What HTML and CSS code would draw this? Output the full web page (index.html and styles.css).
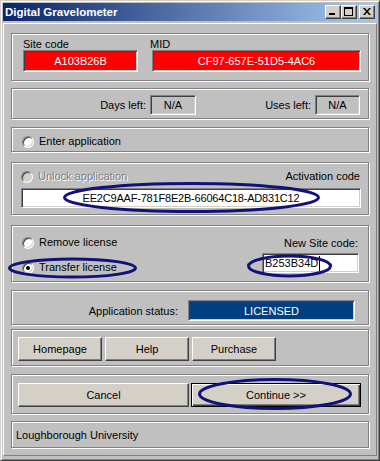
FILE: index.html
```html
<!DOCTYPE html>
<html>
<head>
<meta charset="utf-8">
<link rel="stylesheet" href="styles.css">
</head>
<body>
<div class="window">
  <div class="titlebar">
    <span class="title">Digital Gravelometer</span>
    <div class="tb-btns">
      <span class="tbtn"><svg width="8" height="7" viewBox="0 0 8 7"><rect x="0" y="5" width="6" height="2" fill="#000"/></svg></span>
      <span class="tbtn"><svg width="9" height="9" viewBox="0 0 9 9"><rect x="0.5" y="0.5" width="8" height="8" fill="none" stroke="#000"/><rect x="0" y="0" width="9" height="2" fill="#000"/></svg></span>
      <span class="tbtn close"><svg width="8" height="7" viewBox="0 0 8 7"><path d="M0 0h2l2 2.5L6 0h2L5 3.5 8 7H6L4 4.5 2 7H0l3-3.5z" fill="#000"/></svg></span>
    </div>
  </div>
  <div class="frame">
    <div class="group g1">
      <div class="codes">
        <div class="code">
          <div class="lbl">Site code</div>
          <div class="field red">A103B26B</div>
        </div>
        <div class="code">
          <div class="lbl mid-lbl">MID</div>
          <div class="field red">CF97-657E-51D5-4AC6</div>
        </div>
      </div>
    </div>

    <div class="group g2">
      <div class="stats">
        <div class="pair"><span>Days left:</span><span class="field small">N/A</span></div>
        <div class="pair"><span>Uses left:</span><span class="field small">N/A</span></div>
      </div>
    </div>

    <div class="group g3">
      <div class="opt"><span class="radio"></span><span>Enter application</span></div>
    </div>

    <div class="group g4">
      <div class="unlock-head">
        <div class="opt disabled"><span class="radio off"></span><span>Unlock application</span></div>
        <span>Activation code</span>
      </div>
      <div class="field input center">EE2C9AAF-781F8E2B-66064C18-AD831C12</div>
    </div>

    <div class="group g5">
      <div class="opts">
        <div class="opt"><span class="radio"></span><span>Remove license</span></div>
        <div class="opt"><span class="radio on"></span><span>Transfer license</span></div>
      </div>
      <div class="newsite">
        <span class="ns-lbl">New Site code:</span>
        <div class="field input ns-input">B253B34D<span class="caret"></span></div>
      </div>
    </div>

    <div class="group g6">
      <span>Application status:</span>
      <div class="field status">LICENSED</div>
    </div>

    <div class="group g7">
      <button class="btn small-btn">Homepage</button>
      <button class="btn small-btn">Help</button>
      <button class="btn small-btn">Purchase</button>
    </div>

    <div class="group g8">
      <button class="btn">Cancel</button>
      <button class="btn default">Continue &gt;&gt;</button>
    </div>

    <div class="group g9">
      <span>Loughborough University</span>
    </div>
  </div>

  <svg class="marks" width="380" height="461" viewBox="0 0 380 461">
    <g fill="none" stroke="#10127a" stroke-width="3">
      <ellipse cx="191.5" cy="197.5" rx="127" ry="14"/>
      <ellipse cx="72.5" cy="268" rx="63" ry="9"/>
      <ellipse cx="289.5" cy="266" rx="41" ry="10"/>
      <ellipse cx="275" cy="394" rx="75.5" ry="14.5"/>
    </g>
  </svg>
</div>
</body>
</html>
```

FILE: styles.css
```css
* { box-sizing: border-box; }

html, body {
  margin: 0;
  padding: 0;
  background: #c0c0c0;
}

body {
  font-family: "Liberation Sans", Arial, sans-serif;
  font-size: 11px;
  color: #000;
}

.window {
  position: relative;
  width: 380px;
  height: 461px;
  background: #c0c0c0;
  border: 1px solid;
  border-color: #d4d0c8 #404040 #404040 #d4d0c8;
  box-shadow: inset 1px 1px 0 #fff, inset -1px -1px 0 #808080;
  padding: 2px;
  display: flex;
  flex-direction: column;
}

.titlebar {
  height: 18px;
  flex: none;
  display: flex;
  align-items: flex-start;
  justify-content: space-between;
  background: linear-gradient(to right, #0a246a, #a6caf0);
}

.title {
  color: #fff;
  font-weight: bold;
  font-size: 11.5px;
  line-height: 18px;
  padding-left: 2px;
}

.tb-btns {
  display: flex;
  margin-top: 2px;
  margin-right: 2px;
}

.tbtn {
  width: 16px;
  height: 14px;
  background: #d4d0c8;
  border: 1px solid;
  border-color: #fff #404040 #404040 #fff;
  box-shadow: inset -1px -1px 0 #808080;
  display: flex;
  align-items: center;
  justify-content: center;
  padding: 0 1px 1px 0;
}

.tbtn.close { margin-left: 2px; }

.frame {
  margin-top: 2px;
  height: 433px;
  border: 1px solid;
  border-color: #fff #808080 #808080 #fff;
  padding: 9px 7px 0 7px;
  display: flex;
  flex-direction: column;
}

.group {
  flex: none;
  border: 1px solid #808080;
  box-shadow: inset 1px 1px 0 #fff, 1px 1px 0 #fff;
}

.g1 { height: 48px; padding: 4px 0 0 11px; }
.g2 { height: 31px; margin-top: 7px; padding: 6px 8px 0 0; }
.g3 { height: 25px; margin-top: 8px; padding: 7px 0 0 10px; }
.g4 { height: 53px; margin-top: 10px; padding: 7px 7px 0 9px; }
.g5 { height: 57px; margin-top: 10px; padding: 10px 9px 0 10px; display: flex; justify-content: space-between; }
.g6 { height: 35px; margin-top: 8px; padding: 6px 13px 0 0; display: flex; justify-content: flex-end; align-items: center; align-content: flex-start; }
.g7 { height: 37px; margin-top: 4px; padding: 7px 0 0 6px; display: flex; gap: 3px; align-items: flex-start; }
.g8 { height: 40px; margin-top: 8px; padding: 8px 0 0 6px; display: grid; grid-template-columns: 171px 170px; column-gap: 2px; align-items: start; }
.g9 { height: 27px; margin-top: 7px; padding-left: 4px; display: flex; align-items: center; }

.codes {
  display: grid;
  grid-template-columns: 115px 209px;
  column-gap: 14px;
}

.lbl { line-height: 13px; }
.mid-lbl { margin-left: -2px; }

.field {
  border: 1px solid;
  border-color: #808080 #fff #fff #808080;
  box-shadow: inset 1px 1px 0 #404040, inset -1px -1px 0 #d4d0c8;
  display: flex;
  align-items: center;
  justify-content: center;
  white-space: nowrap;
}

.red {
  margin-top: -1px;
  height: 22px;
  background: #ff0000;
  color: #fff;
}

.stats {
  display: grid;
  grid-template-columns: 1fr 164px;
}

.pair {
  display: flex;
  justify-content: flex-end;
  align-items: center;
  gap: 4px;
}

.small {
  width: 46px;
  height: 20px;
  background: #c0c0c0;
}

.pair + .pair .small { width: 45px; }

.opt {
  display: flex;
  align-items: center;
  gap: 5px;
  height: 13px;
  line-height: 13px;
}

.radio {
  width: 12px;
  height: 12px;
  border-radius: 50%;
  background: #fff;
  border: 1px solid;
  border-color: #808080 #fff #fff #808080;
  box-shadow: inset 1px 1px 0 #404040, inset -1px -1px 0 #d4d0c8;
  display: flex;
  align-items: center;
  justify-content: center;
  flex: none;
}

.radio.on::after {
  content: "";
  width: 4px;
  height: 4px;
  border-radius: 50%;
  background: #000;
}

.radio.off { background: #d4d0c8; }

.disabled { color: #808080; text-shadow: 1px 1px 0 #fff; }

.unlock-head {
  display: flex;
  justify-content: space-between;
  align-items: center;
  height: 13px;
  line-height: 13px;
  padding-right: 1px;
}

.input {
  background: #fff;
  height: 20px;
  margin-top: 5px;
}

.center { justify-content: center; letter-spacing: -0.2px; }

.opts {
  display: flex;
  flex-direction: column;
  gap: 12px;
}

.newsite {
  display: flex;
  flex-direction: column;
  align-items: flex-end;
}

.ns-lbl {
  line-height: 13px;
  margin-top: 1px;
  margin-right: 1px;
}

.ns-input {
  width: 97px;
  margin-top: 3px;
  justify-content: flex-start;
  padding-left: 2px;
}

.caret {
  display: inline-block;
  width: 1px;
  height: 15px;
  background: #000;
  margin-left: 1px;
}

.status {
  width: 167px;
  height: 21px;
  margin-left: 10px;
  background: #003f80;
  color: #fff;
}

.btn {
  font: inherit;
  color: #000;
  background: #d4d0c8;
  border: 1px solid;
  border-color: #fff #404040 #404040 #fff;
  box-shadow: inset -1px -1px 0 #808080;
  height: 24px;
  padding: 0;
  margin: 0;
}

.small-btn { width: 84px; }

.btn.default {
  border: 1px solid #000;
  box-shadow: inset 1px 1px 0 #fff, inset -1px -1px 0 #404040, inset -2px -2px 0 #808080;
}

.marks {
  position: absolute;
  left: -1px;
  top: -1px;
  pointer-events: none;
}
```
